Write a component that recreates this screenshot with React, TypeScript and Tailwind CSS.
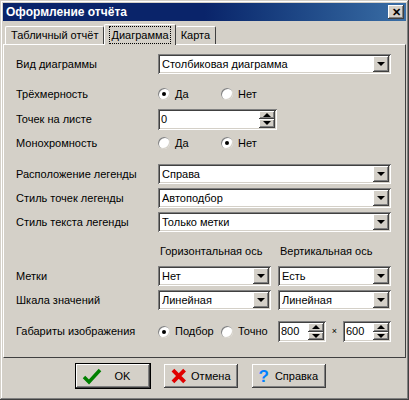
import React from "react";

const sunken = "bg-white shadow-[inset_1px_1px_#808080,inset_-1px_-1px_#ffffff,inset_2px_2px_#404040,inset_-2px_-2px_#d4d0c8]";
const raised = "bg-[#d4d0c8] shadow-[inset_-1px_-1px_#404040,inset_1px_1px_#ffffff,inset_-2px_-2px_#808080,inset_2px_2px_#d4d0c8]";

function Arrow() {
  return <div className="w-0 h-0 border-l-[4px] border-r-[4px] border-t-[4px] border-l-transparent border-r-transparent border-t-black" />;
}

function Combo({ value, w }: { value: string; w: number }) {
  return (
    <div className={`${sunken} h-[20px] flex items-center pl-[4px] pr-[2px]`} style={{ width: w }}>
      <span className="flex-1 truncate">{value}</span>
      <div className={`${raised} w-[16px] h-[16px] flex items-center justify-center`}>
        <Arrow />
      </div>
    </div>
  );
}

function Spin({ value, w }: { value: string; w: number }) {
  return (
    <div className={`${sunken} h-[21px] flex items-center pl-[3px] pr-[2px]`} style={{ width: w }}>
      <span className="flex-1">{value}</span>
      <div className="flex flex-col w-[16px] h-[17px]">
        <div className={`${raised} flex-1 flex items-center justify-center`}>
          <div className="w-0 h-0 border-l-[4px] border-r-[4px] border-b-[4px] border-l-transparent border-r-transparent border-b-black" />
        </div>
        <div className={`${raised} flex-1 flex items-center justify-center`}>
          <Arrow />
        </div>
      </div>
    </div>
  );
}

function Radio({ label, on, w }: { label: string; on?: boolean; w: number }) {
  return (
    <div className="flex items-center gap-[5px]" style={{ width: w }}>
      <div className="w-[12px] h-[12px] shrink-0 rounded-full bg-white shadow-[inset_1px_1px_#808080,inset_-1px_-1px_#d4d0c8] flex items-center justify-center">
        {on && <div className="w-[4px] h-[4px] rounded-full bg-black" />}
      </div>
      <span>{label}</span>
    </div>
  );
}

function Row({ label, children, mt }: { label: string; children: React.ReactNode; mt: string }) {
  return (
    <div className={`flex items-center ${mt}`}>
      <div className="w-[142px]">{label}</div>
      {children}
    </div>
  );
}

export default function App() {
  return (
    <div className="w-[409px] h-[400px] bg-[#d4d0c8] text-[11px] text-black shadow-[inset_-1px_-1px_#404040,inset_1px_1px_#d4d0c8,inset_-2px_-2px_#808080,inset_2px_2px_#ffffff] p-[3px] flex flex-col" style={{ fontFamily: '"Liberation Sans", Arial, sans-serif' }}>
      <div className="h-[18px] bg-gradient-to-r from-[#0a246a] via-[#0a246a] to-[#3a6ea5] flex items-center pl-[3px] pr-[2px]">
        <span className="flex-1 text-white font-bold text-[12px]">Оформление отчёта</span>
        <div className={`${raised} w-[16px] h-[14px] flex items-center justify-center text-[11px] font-bold leading-none`}>✕</div>
      </div>
      <div className="flex items-end h-[22px] pl-[2px] mt-[1px]">
        <div className="h-[18px] px-[5px] flex items-center border-t border-l border-white border-r border-r-[#404040] rounded-t-[2px]">Табличный отчёт</div>
        <div className="h-[21px] px-[5px] flex items-center border-t border-l border-white border-r border-r-[#404040] rounded-t-[2px] relative z-10 bg-[#d4d0c8] -mb-px">
          <span className="outline-1 outline-dotted outline-black px-[1px]">Диаграмма</span>
        </div>
        <div className="h-[18px] px-[5px] flex items-center border-t border-white border-r border-r-[#404040] rounded-t-[2px]">Карта</div>
      </div>
      <div className="h-[314px] border-t border-l border-white border-r border-b border-r-[#404040] border-b-[#404040] px-[12px] pt-[9px]">
        <Row label="Вид диаграммы" mt="">
          <Combo value="Столбиковая диаграмма" w={233} />
        </Row>
        <Row label="Трёхмерность" mt="mt-[12px]">
          <Radio label="Да" on w={63} />
          <Radio label="Нет" w={60} />
        </Row>
        <Row label="Точек на листе" mt="mt-[6px]">
          <Spin value="0" w={119} />
        </Row>
        <Row label="Монохромность" mt="mt-[5px]">
          <Radio label="Да" w={63} />
          <Radio label="Нет" on w={60} />
        </Row>
        <Row label="Расположение легенды" mt="mt-[13px]">
          <Combo value="Справа" w={233} />
        </Row>
        <Row label="Стиль точек легенды" mt="mt-[4px]">
          <Combo value="Автоподбор" w={233} />
        </Row>
        <Row label="Стиль текста легенды" mt="mt-[4px]">
          <Combo value="Только метки" w={233} />
        </Row>
        <div className="flex mt-[11px] h-[16px] items-center">
          <div className="w-[144px]" />
          <div className="w-[120px]">Горизонтальная ось</div>
          <div>Вертикальная ось</div>
        </div>
        <Row label="Метки" mt="mt-[7px]">
          <Combo value="Нет" w={113} />
          <div className="w-[7px]" />
          <Combo value="Есть" w={113} />
        </Row>
        <Row label="Шкала значений" mt="mt-[4px]">
          <Combo value="Линейная" w={113} />
          <div className="w-[7px]" />
          <Combo value="Линейная" w={113} />
        </Row>
        <Row label="Габариты изображения" mt="mt-[11px]">
          <Radio label="Подбор" on w={63} />
          <Radio label="Точно" w={57} />
          <Spin value="800" w={48} />
          <span className="w-[17px] text-center text-[9px]">×</span>
          <Spin value="600" w={48} />
        </Row>
      </div>
      <div className="flex justify-center gap-[14px] mt-[6px] ml-[-8px]">
        <div className={`${raised} w-[74px] h-[24px] flex items-center px-[6px] outline outline-1 outline-black`}>
          <svg width="20" height="18" viewBox="0 0 20 18"><path d="M2 10 L7 15 L18 3" stroke="#008000" strokeWidth="3.5" fill="none" /></svg>
          <span className="flex-1 text-center">OK</span>
        </div>
        <div className={`${raised} w-[74px] h-[24px] flex items-center gap-[5px] px-[7px]`}>
          <svg width="16" height="16" viewBox="0 0 16 16"><path d="M2 2 L14 14 M14 2 L2 14" stroke="#e00000" strokeWidth="4" /></svg>
          <span>Отмена</span>
        </div>
        <div className={`${raised} w-[74px] h-[24px] flex items-center gap-[6px] px-[7px]`}>
          <span className="text-[#0080ff] font-bold text-[17px] leading-none">?</span>
          <span>Справка</span>
        </div>
      </div>
    </div>
  );
}
